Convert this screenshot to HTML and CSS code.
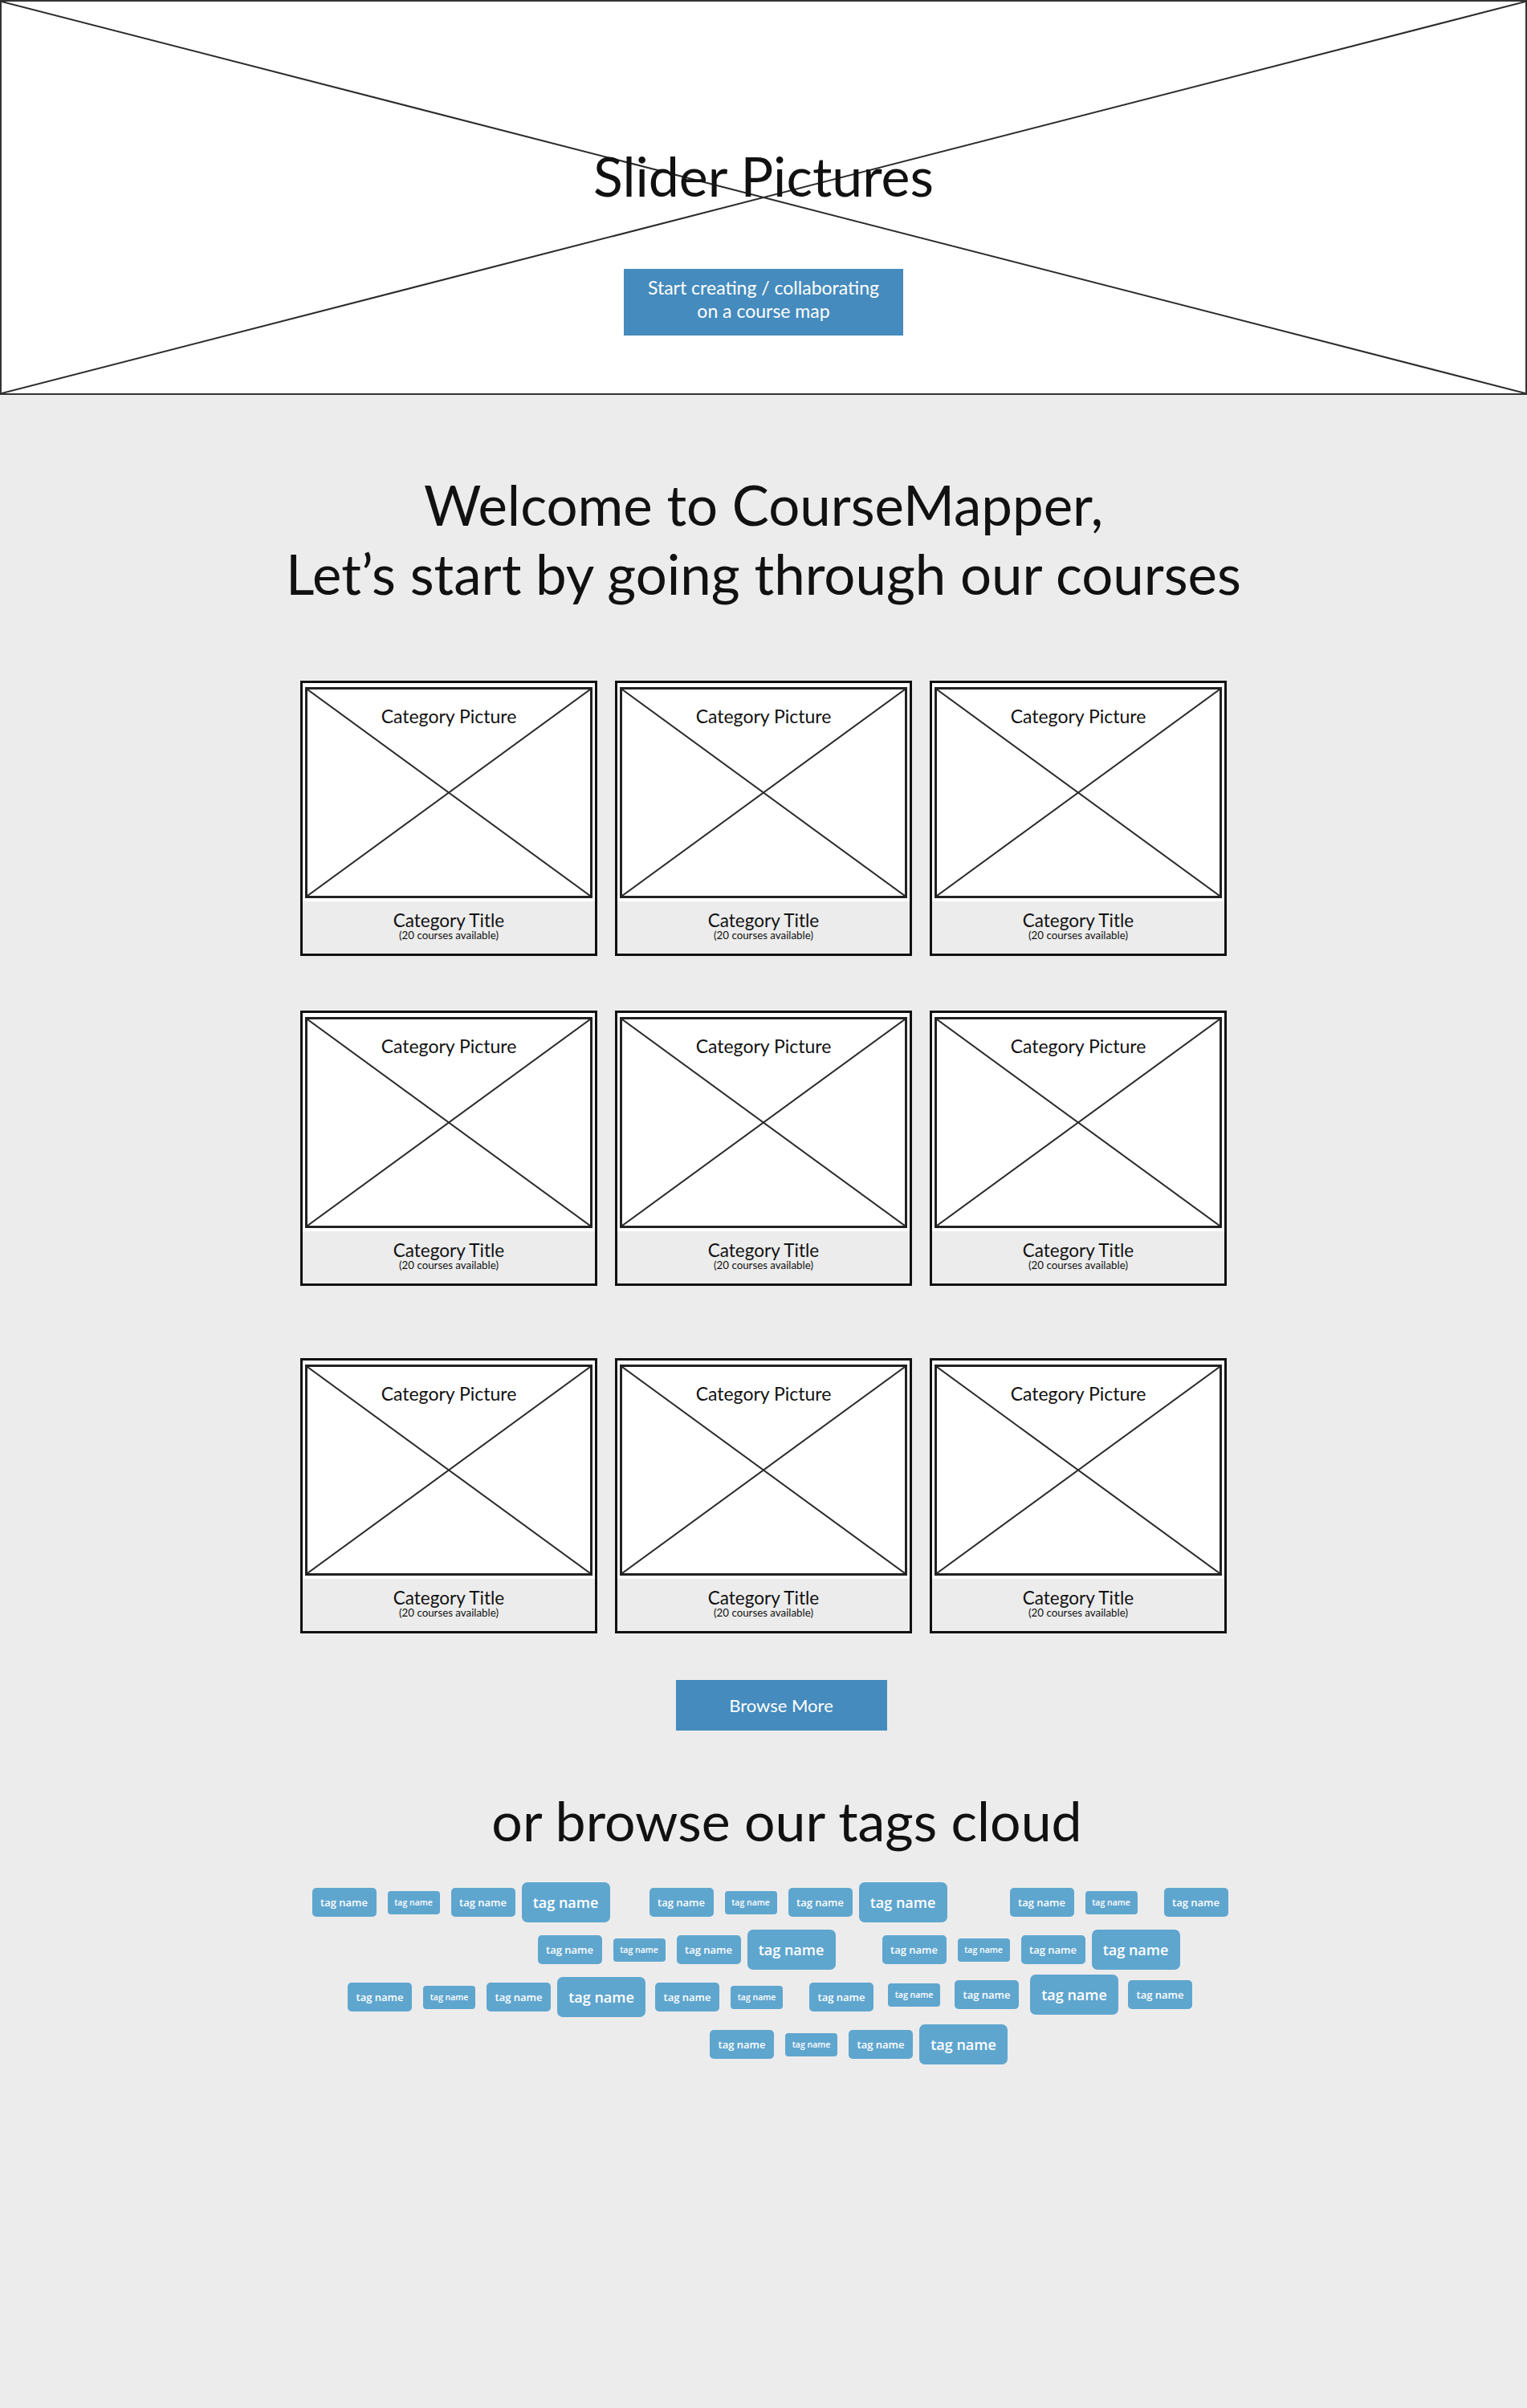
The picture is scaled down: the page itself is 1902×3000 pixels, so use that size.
FILE: index.html
```html
<!DOCTYPE html>
<html lang="en">
<head>
    <meta charset="utf-8">
    <meta name="viewport" content="width=device-width, initial-scale=1">
    <title>CourseMapper</title>
    <link rel="stylesheet" href="styles.css">
</head>
<body>
    <header class="slider">
        <svg class="cross" viewBox="0 0 100 100" preserveAspectRatio="none">
            <line x1="0" y1="0" x2="100" y2="100"/>
            <line x1="100" y1="0" x2="0" y2="100"/>
        </svg>
        <div class="slider-title">Slider Pictures</div>
        <a class="btn btn-start" href="#">Start creating / collaborating<br>on a course map</a>
    </header>

    <h1 class="welcome">Welcome to CourseMapper,<br>Let’s start by going through our courses</h1>

    <section class="categories">
        <div class="card-row">
            <div class="card">
                <div class="card-pic">
                    <svg class="cross" viewBox="0 0 100 100" preserveAspectRatio="none"><line x1="0" y1="0" x2="100" y2="100"/><line x1="100" y1="0" x2="0" y2="100"/></svg>
                    <div class="card-pic-label">Category Picture</div>
                </div>
                <div class="card-foot">
                    <div class="card-title">Category Title</div>
                    <div class="card-count">(20 courses available)</div>
                </div>
            </div>
            <div class="card">
                <div class="card-pic">
                    <svg class="cross" viewBox="0 0 100 100" preserveAspectRatio="none"><line x1="0" y1="0" x2="100" y2="100"/><line x1="100" y1="0" x2="0" y2="100"/></svg>
                    <div class="card-pic-label">Category Picture</div>
                </div>
                <div class="card-foot">
                    <div class="card-title">Category Title</div>
                    <div class="card-count">(20 courses available)</div>
                </div>
            </div>
            <div class="card">
                <div class="card-pic">
                    <svg class="cross" viewBox="0 0 100 100" preserveAspectRatio="none"><line x1="0" y1="0" x2="100" y2="100"/><line x1="100" y1="0" x2="0" y2="100"/></svg>
                    <div class="card-pic-label">Category Picture</div>
                </div>
                <div class="card-foot">
                    <div class="card-title">Category Title</div>
                    <div class="card-count">(20 courses available)</div>
                </div>
            </div>
        </div>

        <div class="card-row">
            <div class="card">
                <div class="card-pic">
                    <svg class="cross" viewBox="0 0 100 100" preserveAspectRatio="none"><line x1="0" y1="0" x2="100" y2="100"/><line x1="100" y1="0" x2="0" y2="100"/></svg>
                    <div class="card-pic-label">Category Picture</div>
                </div>
                <div class="card-foot">
                    <div class="card-title">Category Title</div>
                    <div class="card-count">(20 courses available)</div>
                </div>
            </div>
            <div class="card">
                <div class="card-pic">
                    <svg class="cross" viewBox="0 0 100 100" preserveAspectRatio="none"><line x1="0" y1="0" x2="100" y2="100"/><line x1="100" y1="0" x2="0" y2="100"/></svg>
                    <div class="card-pic-label">Category Picture</div>
                </div>
                <div class="card-foot">
                    <div class="card-title">Category Title</div>
                    <div class="card-count">(20 courses available)</div>
                </div>
            </div>
            <div class="card">
                <div class="card-pic">
                    <svg class="cross" viewBox="0 0 100 100" preserveAspectRatio="none"><line x1="0" y1="0" x2="100" y2="100"/><line x1="100" y1="0" x2="0" y2="100"/></svg>
                    <div class="card-pic-label">Category Picture</div>
                </div>
                <div class="card-foot">
                    <div class="card-title">Category Title</div>
                    <div class="card-count">(20 courses available)</div>
                </div>
            </div>
        </div>

        <div class="card-row card-row-far">
            <div class="card">
                <div class="card-pic">
                    <svg class="cross" viewBox="0 0 100 100" preserveAspectRatio="none"><line x1="0" y1="0" x2="100" y2="100"/><line x1="100" y1="0" x2="0" y2="100"/></svg>
                    <div class="card-pic-label">Category Picture</div>
                </div>
                <div class="card-foot">
                    <div class="card-title">Category Title</div>
                    <div class="card-count">(20 courses available)</div>
                </div>
            </div>
            <div class="card">
                <div class="card-pic">
                    <svg class="cross" viewBox="0 0 100 100" preserveAspectRatio="none"><line x1="0" y1="0" x2="100" y2="100"/><line x1="100" y1="0" x2="0" y2="100"/></svg>
                    <div class="card-pic-label">Category Picture</div>
                </div>
                <div class="card-foot">
                    <div class="card-title">Category Title</div>
                    <div class="card-count">(20 courses available)</div>
                </div>
            </div>
            <div class="card">
                <div class="card-pic">
                    <svg class="cross" viewBox="0 0 100 100" preserveAspectRatio="none"><line x1="0" y1="0" x2="100" y2="100"/><line x1="100" y1="0" x2="0" y2="100"/></svg>
                    <div class="card-pic-label">Category Picture</div>
                </div>
                <div class="card-foot">
                    <div class="card-title">Category Title</div>
                    <div class="card-count">(20 courses available)</div>
                </div>
            </div>
        </div>
    </section>

    <div class="browse">
        <a class="btn btn-browse" href="#">Browse More</a>
    </div>

    <h2 class="tags-title">or browse our tags cloud</h2>

    <div class="tag-cloud">
        <div class="tag-row">
            <a class="tag tag-m" href="#">tag name</a>
            <a class="tag tag-s" href="#">tag name</a>
            <a class="tag tag-m" href="#">tag name</a>
            <a class="tag tag-l" href="#">tag name</a>
            <a class="tag tag-m gap-49" href="#">tag name</a>
            <a class="tag tag-s" href="#">tag name</a>
            <a class="tag tag-m" href="#">tag name</a>
            <a class="tag tag-l" href="#">tag name</a>
            <a class="tag tag-m gap-78" href="#">tag name</a>
            <a class="tag tag-s" href="#">tag name</a>
            <a class="tag tag-m gap-33" href="#">tag name</a>
        </div>
        <div class="tag-row tag-row-shift">
            <a class="tag tag-m" href="#">tag name</a>
            <a class="tag tag-s" href="#">tag name</a>
            <a class="tag tag-m" href="#">tag name</a>
            <a class="tag tag-l" href="#">tag name</a>
            <a class="tag tag-m gap-58" href="#">tag name</a>
            <a class="tag tag-s" href="#">tag name</a>
            <a class="tag tag-m" href="#">tag name</a>
            <a class="tag tag-l" href="#">tag name</a>
        </div>
        <div class="tag-row">
            <a class="tag tag-m" href="#">tag name</a>
            <a class="tag tag-s" href="#">tag name</a>
            <a class="tag tag-m" href="#">tag name</a>
            <a class="tag tag-l" href="#">tag name</a>
            <a class="tag tag-m" href="#">tag name</a>
            <a class="tag tag-s" href="#">tag name</a>
            <a class="tag tag-m gap-33" href="#">tag name</a>
            <a class="tag tag-s gap-18 raised" href="#">tag name</a>
            <a class="tag tag-m gap-18 raised" href="#">tag name</a>
            <a class="tag tag-l gap-14 raised" href="#">tag name</a>
            <a class="tag tag-m raised" href="#">tag name</a>
        </div>
        <div class="tag-row tag-row-shift">
            <a class="tag tag-m" href="#">tag name</a>
            <a class="tag tag-s" href="#">tag name</a>
            <a class="tag tag-m" href="#">tag name</a>
            <a class="tag tag-l" href="#">tag name</a>
        </div>
    </div>
</body>
</html>
```

FILE: styles.css
```css
body {
    margin: 0;
    background-color: #ececec;
    font-family: Lato, "Open Sans", sans-serif;
    color: #111;
    min-height: 3000px;
}

.cross {
    position: absolute;
    top: 0;
    left: 0;
    width: 100%;
    height: 100%;
}
.cross line {
    stroke: #2b2b2b;
    stroke-width: 2;
    vector-effect: non-scaling-stroke;
}

.btn {
    display: inline-block;
    background-color: #458bbd;
    color: #fff;
    text-align: center;
    text-decoration: none;
}

/* slider */
.slider {
    position: relative;
    height: 492px;
    box-sizing: border-box;
    border: 2px solid #333;
    background: #fff;
    display: flex;
    flex-direction: column;
    align-items: center;
    padding-top: 183px;
}
.slider-title {
    position: relative;
    font-size: 68px;
    line-height: 68px;
}
.btn-start {
    position: relative;
    margin-top: 82px;
    width: 348px;
    padding: 9px 0 16px;
    font-size: 23px;
    line-height: 29px;
}

.welcome {
    margin: 94px 0 0;
    text-align: center;
    font-size: 69px;
    line-height: 86px;
    font-weight: 400;
}

/* category cards */
.categories {
    width: 1154px;
    margin: 90px auto 0;
}
.card-row {
    display: flex;
    gap: 22px;
}
.card-row + .card-row {
    margin-top: 68px;
}
.card-row.card-row-far {
    margin-top: 90px;
}
.card {
    width: 370px;
    box-sizing: border-box;
    border: 3px solid #111;
    background: #fff;
}
.card-pic {
    position: relative;
    height: 263px;
    box-sizing: border-box;
    margin: 5px 3px 4px;
    border: 3px solid #222;
    text-align: center;
}
.card-pic-label {
    position: relative;
    padding-top: 20px;
    font-size: 23px;
    line-height: 26px;
}
.card-foot {
    height: 65px;
    box-sizing: border-box;
    padding-top: 12px;
    background: #ececec;
    text-align: center;
}
.card-title {
    font-size: 22.5px;
    line-height: 23px;
}
.card-count {
    font-size: 13.3px;
    line-height: 14px;
}

/* browse */
.browse {
    margin-top: 58px;
    padding-left: 44px;
    text-align: center;
}
.btn-browse {
    width: 263px;
    height: 63px;
    line-height: 63px;
    font-size: 22px;
}

.tags-title {
    margin: 78px 0 0;
    padding-left: 58px;
    text-align: center;
    font-size: 68px;
    line-height: 68px;
    font-weight: 400;
}

/* tag cloud */
.tag-cloud {
    margin-top: 43px;
    display: flex;
    flex-direction: column;
    gap: 9px;
}
.tag-row {
    display: flex;
    justify-content: center;
    align-items: center;
    height: 50px;
    padding-left: 16px;
}
.tag-row.tag-row-shift {
    padding-left: 237px;
}
.tag {
    display: flex;
    align-items: center;
    justify-content: center;
    flex: none;
    box-sizing: border-box;
    background-color: #5fa6cf;
    color: #fff;
    font-family: "Open Sans", sans-serif;
    font-weight: 600;
    text-decoration: none;
    white-space: nowrap;
}
.tag + .tag {
    margin-left: 14px;
}
.tag + .tag-l {
    margin-left: 8px;
}
.tag-l + .tag {
    margin-left: 12px;
}
.tag-s {
    width: 65px;
    height: 29px;
    border-radius: 4px;
    font-size: 10.5px;
}
.tag-m {
    width: 80px;
    height: 36px;
    border-radius: 5px;
    font-size: 13px;
}
.tag-l {
    width: 110px;
    height: 50px;
    border-radius: 7px;
    font-size: 18px;
}
.tag-row .gap-14 { margin-left: 14px; }
.tag-row .gap-18 { margin-left: 18px; }
.tag-row .gap-33 { margin-left: 33px; }
.tag-row .gap-49 { margin-left: 49px; }
.tag-row .gap-58 { margin-left: 58px; }
.tag-row .gap-78 { margin-left: 78px; }
.tag-row .raised {
    margin-top: -6px;
}
```
